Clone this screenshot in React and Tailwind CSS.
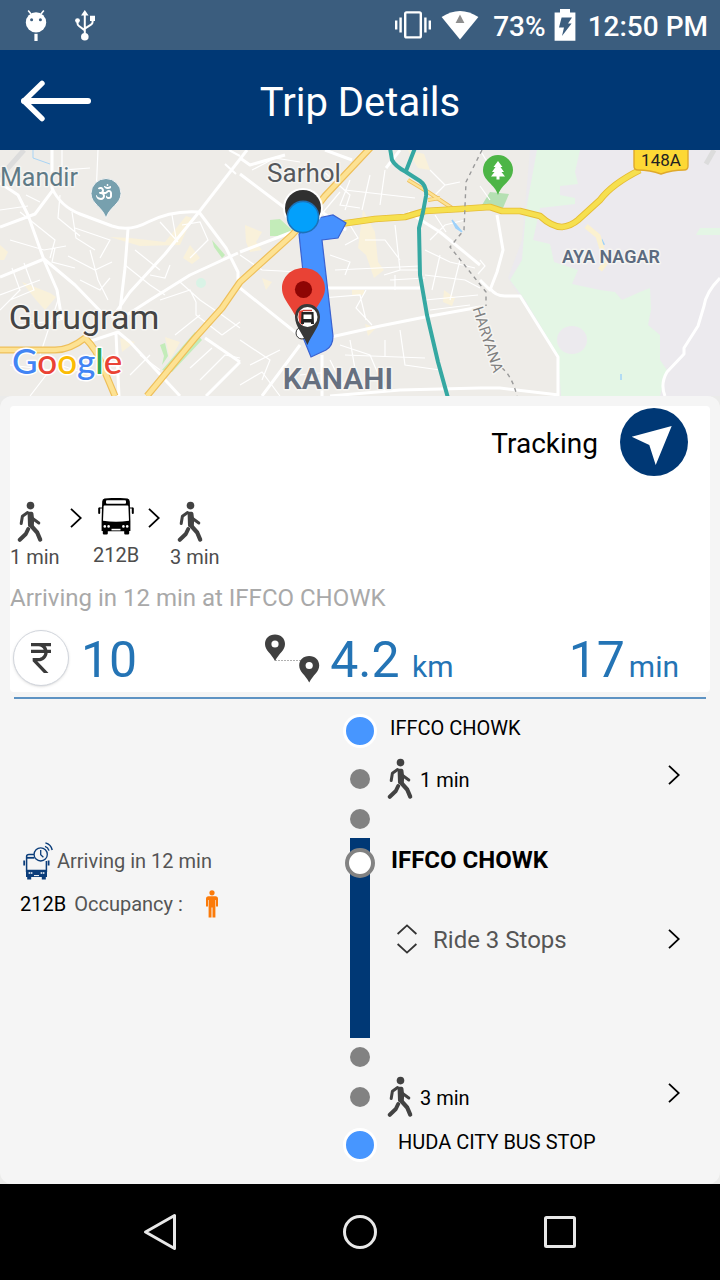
import React, { useState } from 'react';
import { FaOm } from 'react-icons/fa';
import { MdCurrencyRupee } from 'react-icons/md';
import clsx from 'clsx';

const WalkIcon = ({ className }) => (
    <svg viewBox="0 0 26 42" className={clsx("w-[26px] h-[42px] shrink-0", className)} fill="none" stroke="#424242" strokeLinecap="round" strokeLinejoin="round" aria-hidden="true">
        <circle cx="13.5" cy="4.6" r="3.8" fill="#424242" stroke="none" />
        <path d="M12.4 12.5 L14.6 12.5 L15.4 19 L15 24.5 L12.8 24.5 Z" fill="#424242" strokeWidth="3.6" />
        <path d="M10.6 11.6 L5.4 15.2 L4.2 22.6" strokeWidth="3" />
        <path d="M16 17.8 L21.8 22" strokeWidth="3" />
        <path d="M14.8 25.5 L20.2 31.5 L23.2 38.6" strokeWidth="4.2" />
        <path d="M11.2 28 L8.8 33 L2.8 38.8" strokeWidth="4" />
    </svg>
);

const BusIcon = ({ className }) => (
    <svg viewBox="0 0 36 37" className={className} aria-hidden="true">
        <path d="M6.5 .6 Q18 -.8 29.5 .6 Q31.6 1 31.8 3.5 L32.4 23 V33 H31.2 V35.5 Q31.2 36.6 30 36.6 H27.4 Q26.2 36.6 26.2 35.5 V33.2 H9.8 V35.5 Q9.8 36.6 8.6 36.6 H6 Q4.8 36.6 4.8 35.5 V33 H3.6 V23 L4.2 3.5 Q4.4 1 6.5 .6 Z" fill="currentColor" />
        <rect x="8" y="2.2" width="20" height="3.6" rx="1" fill="#fff" />
        <path d="M6.4 7.4 H29.6 Q30.4 7.4 30.4 8.4 L31 22.8 Q18 24.8 5 22.8 L5.6 8.4 Q5.6 7.4 6.4 7.4 Z" fill="#fff" />
        <circle cx="6.8" cy="28.4" r="1.3" fill="#fff" />
        <circle cx="10.6" cy="28.4" r="1.3" fill="#fff" />
        <circle cx="25.4" cy="28.4" r="1.3" fill="#fff" />
        <circle cx="29.2" cy="28.4" r="1.3" fill="#fff" />
        <rect x="13.5" y="30.8" width="9" height="1.6" fill="#fff" />
        <rect x=".2" y="9.4" width="2" height="6.6" rx="1" fill="currentColor" />
        <rect x="33.8" y="9.4" width="2" height="6.6" rx="1" fill="currentColor" />
        <path d="M1.2 10 H4 M32 10 H34.8" stroke="currentColor" strokeWidth="1" />
    </svg>
);

const ArrivingBusIcon = () => (
    <svg viewBox="0 0 30 38" className="w-[30px] h-[38px] shrink-0" fill="none" stroke="#0b3d7a" aria-hidden="true">
        <path d="M3.6 30 V14.5 Q3.6 12.4 6 12.4 H13 M23.4 19 V30" strokeWidth="1.5" />
        <path d="M4 15.8 H11.5" strokeWidth="1.8" />
        <path d="M3 27.8 H24 V35 H22.8 V37.4 H18.8 V35 H8.2 V37.4 H4.2 V35 H3 Z" fill="#0b3d7a" stroke="none" />
        <path d="M5.6 31 H9.4 M17.6 31 H21.4" stroke="#fff" strokeWidth="1.4" strokeDasharray="1.6 .6" />
        <path d="M11 33.6 H16" stroke="#fff" strokeWidth="1" />
        <path d="M1.2 18.6 V23.6 M25.6 18.6 V23.6" strokeWidth="1.8" />
        <circle cx="17.7" cy="12.4" r="6.6" strokeWidth="1.3" fill="#f5f5f5" />
        <path d="M17.7 8 V12.8 L20.4 15.2" strokeWidth="1.3" />
        <path d="M22 4.4 Q25 5.4 26 8.6 M22.4 .9 Q28 2.4 29.2 8" strokeWidth="1.5" />
    </svg>
);

const Chevron = () => (
    <svg viewBox="0 0 12 20" className="w-3 h-5 shrink-0" fill="none" stroke="#000" strokeWidth="1.8" aria-hidden="true">
        <path d="M1 .8 L10.8 10 L1 19.2" />
    </svg>
);

const StatusBar = () => (
    <div className="flex items-center h-[50px] pl-6 pr-3 bg-[#3b5d7e] text-white text-[28px] leading-8 font-medium">
        <svg viewBox="0 0 24 32" className="w-6 h-8" aria-hidden="true">
            <circle cx="12" cy="13.4" r="10.2" fill="#fff" />
            <path d="M7 5 L4.2 1.6 M17 5 L19.8 1.6" stroke="#fff" strokeWidth="1.6" />
            <circle cx="7.6" cy="10.8" r="1.5" fill="#3b5d7e" />
            <circle cx="16.4" cy="10.8" r="1.5" fill="#3b5d7e" />
            <rect x="10.4" y="24.8" width="3.2" height="7.2" fill="#fff" />
        </svg>
        <svg viewBox="0 0 22 32" className="w-[22px] h-8 ml-[26px]" fill="none" stroke="#fff" strokeWidth="2" aria-hidden="true">
            <path d="M10.8 4 V26 M3.5 11 V14.5 Q3.5 16 5 17 L10.8 21.4 M18.6 10 V13 Q18.6 14.6 17 15.6 L10.8 19.6" />
            <path d="M10.8 1 L14.6 6.4 H7 Z M16 6.8 H21 V12 H16 Z" fill="#fff" stroke="none" />
            <circle cx="3.5" cy="11.6" r="2.4" fill="#fff" stroke="none" />
            <circle cx="10.8" cy="27.8" r="3.8" fill="#fff" stroke="none" />
        </svg>
        <div className="flex-1" />
        <svg viewBox="0 0 36 28" className="w-9 h-7" fill="none" stroke="#fff" aria-hidden="true">
            <rect x="10.2" y="1.4" width="15.6" height="25" rx="1.4" strokeWidth="2.4" />
            <path d="M1.2 9.5 V18.5 M34.8 9.5 V18.5 M5.6 6.5 V21.5 M30.4 6.5 V21.5" strokeWidth="2.4" />
        </svg>
        <svg viewBox="0 0 38 30" className="w-[38px] h-[30px] ml-2.5" aria-hidden="true">
            <path d="M.6 7 Q19 -5 37.4 7 L19 29.4 Z" fill="#fff" />
            <path d="M19 4.4 L23.4 13 H14.6 Z" fill="#8f8f8f" />
        </svg>
        <span className="ml-3.5 pt-1">73%</span>
        <svg viewBox="0 0 22 32" className="w-[22px] h-8 ml-2" aria-hidden="true">
            <path d="M6 0 H16 V3.4 H21.4 V31.8 H.6 V3.4 H6 Z" fill="#fff" />
            <path d="M7.6 8.6 H18 L14 14.6 H17.6 L8 27 L10 18.6 H5 Z" fill="#3b5d7e" />
        </svg>
        <span className="ml-3 pt-1">12:50 PM</span>
    </div>
);

const Header = () => (
    <header className="grid grid-cols-[1fr_auto_1fr] items-center h-[100px] px-5 pt-0.5 bg-[#003875] text-white">
        <button type="button" aria-label="Back" className="justify-self-start">
            <svg viewBox="0 0 72 42" className="w-[72px] h-[42px]" fill="none" stroke="#fff" strokeLinecap="round" strokeLinejoin="round">
                <path d="M4 21 H68" strokeWidth="6" />
                <path d="M22 3.4 L4 21 L22 38.6" strokeWidth="5.4" />
            </svg>
        </button>
        <h1 className="text-[40px] leading-12 pt-1 font-normal">Trip Details</h1>
    </header>
);

const TripMap = () => (
    <svg viewBox="0 0 720 246" preserveAspectRatio="xMidYMid slice" className="block w-full h-[246px] shrink-0" fontFamily="Roboto, sans-serif" role="img" aria-label="Trip map">
        <rect width="720" height="246" fill="#eeece8" />
        <path d="M530 0 H720 V246 H560 L558 205 L508 128 L522 90 Z" fill="#eceaee" />
        <path d="M537 0 H580 L575 22 L578 34 L560 36 V45 L575 48 V54 L540 58 L533 90 L550 94 L554 112 L578 120 L572 134 L600 140 L615 142 L622 150 L640 142 L650 138 L651 160 L648 175 L660 185 V210 L667 220 L660 246 H561 L558 205 L525 150 L510 130 L522 110 L526 60 Z" fill="#e4f6e5" />
        <path d="M700 78 H720 V85 H696 Z" fill="#e4f6e5" />
        <ellipse cx="572" cy="190" rx="15" ry="14" fill="#eceaee" />
        <path d="M0 95 L8 102 L4 110 H0 Z M110 87 L130 88 L165 92 L186 66 L192 68 L180 95 L140 96 Z M190 95 L200 108 L192 114 L183 108 Z M22 132 L50 143 L56 147 L45 160 L36 150 Z M120 188 L135 192 L122 202 Z M165 187 L180 192 L170 210 Z M245 75 L262 82 L256 92 L262 100 L250 102 L246 92 Z M363 60 L375 82 L378 112 L384 120 L374 128 L366 105 L358 98 Z M262 128 L272 132 L266 140 Z M408 0 L424 4 L430 20 L418 18 L412 8 Z M444 140 L455 148 L452 156 L443 152 Z M352 140 H364 V145 H352 Z M365 174 L376 178 L368 186 Z" fill="#f9f1da" />
        <path d="M212 90 L225 105 L222 108 L214 97 Z M160 195 L165 193 L168 206 L162 215 L164 206 Z M162 220 L195 182 L202 190 L172 222 Z M270 70 L280 69 L292 80 L286 86 L270 86 Z" fill="#c3ecb9" />
        <path d="M482 55 L490 42 L509 44 L503 58 Z" fill="#b5e0b3" />
        <circle cx="201" cy="133" r="5" fill="#d9f3e6" />

        {/* minor streets */}
        <g fill="none" stroke="#fff" strokeWidth="1.2">
            <path d="M98 0 L96 45 M62 0 V20 L90 18 M72 62 L76 88 L95 100 M26 45 L40 52 M20 62 L55 90 L50 108 M0 60 L28 56 M60 45 L58 68 L80 86 M10 90 L44 100 L66 96 M55 98 L52 112 L75 118 M68 106 L95 120 L112 112 M90 100 L98 130 L108 150 M80 130 L100 140 L110 128 M0 145 L40 130 M12 118 L20 140 L0 160 M24 113 L34 140 L10 150 M40 205 L58 150 M10 215 L50 220 L30 246 M60 215 L90 225 M75 78 L110 90 L100 108 M125 115 L150 135 L165 145 M135 100 L160 120 M172 65 L176 88 M160 72 L178 92 M182 75 L200 72 L208 90 L190 108 M150 125 L165 128 L170 115 M180 132 L200 150 L222 165 L240 178 M160 150 L190 140 L196 152 M196 152 V165 L222 185 M200 165 L175 185 M222 185 L240 172 M140 205 L160 220 M130 225 L150 205 M190 218 L212 198 M200 230 L225 205 L240 208 M60 170 L20 175" />
            <path d="M252 20 L275 8 L300 12 M310 78 L340 42 M322 20 L350 45 L345 60 M350 30 L340 55 L360 58 M370 25 L362 60 M385 20 L380 55 M345 40 L415 48 M350 75 L358 88 L345 95 M365 90 H385 L400 110 M395 75 L400 120 L384 125 M330 105 L350 112 L345 125 M240 105 L262 120 L300 122 M335 120 L420 116 M322 148 L360 145 L366 170 M366 140 L356 158 L372 175 M395 125 V140 M400 120 H420 M390 130 L425 128 M425 100 L450 112 L475 118 M425 125 L465 130 L480 138 M440 105 L432 140 M460 110 L450 150 M425 150 L478 145 M430 160 L470 155 M340 195 L370 205 L385 240 M350 190 L356 225 L340 235 M400 180 L405 215 L440 220 M330 210 L345 240 M345 205 L425 208 M385 190 V206 M240 190 L270 210 L262 230 M250 215 L280 200 M240 235 L262 222 L280 246 M300 225 L330 222 M430 20 L445 35 L460 32 M445 35 L430 50 M430 90 L445 75 L465 70 M435 65 L446 82" />
            <path d="M480 0 L492 20 M480 36 L490 50 M480 110 L485 116 L478 124" />
        </g>

        {/* main roads */}
        <g fill="none" stroke="#fff" strokeWidth="3" strokeLinejoin="round">
            <path d="M52 0 V38 Q60 56 80 64 L112 76 Q130 82 148 72 Q172 60 199 62 L247 0" />
            <path d="M199 62 L226 98 L238 122 V134" />
            <path d="M0 77 L35 64 L53 40 M0 33 L18 45 L28 65 L44 110 L57 140 L62 170" />
            <path d="M0 127 L44 109 L75 135 L104 165 M128 79 L125 118 L120 160 M199 62 L165 104 L130 142 L112 168 M116 172 L150 150 L190 125 L238 103" />
            <path d="M88 192 L118 182 L130 192 L180 246 M116 184 L119 246 M205 188 L240 212 M206 246 L240 212" />
            <path d="M240 24 L285 58 M240 8 L250 15 L285 5 M325 0 L352 10 M322 62 L346 80 M322 138 H420 M331 187 L380 176 L425 167 L480 157 M240 138 L300 186 M240 102 L292 82 M300 195 L262 246 M322 205 V246 M330 246 L400 240 L480 238" />
            <path d="M408 62 L440 82 L480 115 M400 0 L386 18" />
            <path d="M497 65 L503 100 L497 122 L490 140 L480 130 M490 138 Q495 146 505 146 H520 L558 207 V246 M480 238 H500 L559 245" />
            <path d="M720 128 Q706 142 704 156 L698 176 L684 198 V204 L667 222 Q660 234 665 246" />
        </g>
        <path d="M225 14 L236 24 M229 0 L240 6" stroke="#fff" strokeWidth="2" />
        <path d="M706 14 L714 0" stroke="#dcdcdc" strokeWidth="5" />
        <path d="M0 27 L24 0" stroke="#dcdcdc" strokeWidth="5" />
        <path d="M33 0 V8 L50 14" fill="none" stroke="#a9d4f5" strokeWidth="1" />
        <path d="M452 70 L462 82 L456 78 Z M602 90 L604 94 H600 Z M621 224 V230" fill="#9dd1fa" stroke="#9dd1fa" strokeWidth="1.4" />
        <path d="M586 76 L598 86 L606 112 L600 120" fill="none" stroke="#fbf1d0" strokeWidth="5" />

        {/* highways */}
        <g fill="none" strokeLinejoin="round">
            <g stroke="#eebf5a" strokeWidth="7">
                <path d="M0 200 H55 Q70 200 85 188 Q97 200 102 215 L115 246" />
                <path d="M147 246 L195 188 L222 158 L240 132 L292 85 L310 65 L325 46 L372 -4" />
                <path d="M408 30 L428 42 L452 58 M428 50 L440 48" strokeWidth="4" />
            </g>
            <g stroke="#fde293" strokeWidth="4.6">
                <path d="M0 200 H55 Q70 200 85 188 Q97 200 102 215 L115 246" />
                <path d="M147 246 L195 188 L222 158 L240 132 L292 85 L310 65 L325 46 L372 -4" />
                <path d="M408 30 L428 42 L452 58 M428 50 L440 48" strokeWidth="2.4" />
            </g>
            <path d="M340 74 L375 69 L405 67 L425 61 L460 59 L490 57 L502 61 L520 61 L540 66 Q552 77 562 77 Q571 76 578 70 L600 50 Q612 34 640 20" stroke="#e6bd35" strokeWidth="6.6" />
            <path d="M340 74 L375 69 L405 67 L425 61 L460 59 L490 57 L502 61 L520 61 L540 66 Q552 77 562 77 Q571 76 578 70 L600 50 Q612 34 640 20" stroke="#f6e04f" strokeWidth="4.8" />
            <path d="M390 -2 L392 10 Q395 16 406 22 L420 31 Q427 36 426 46 L423 62 L419 78 L420 125 L427 165 L438 212 L448 248 M415 -2 L406 21" stroke="#35a8a2" strokeWidth="4" />
            <path d="M482 0 L466 32 L464 80 L450 97 L486 142 V156 M502 218 Q512 226 517 246" stroke="#9a9a9a" strokeWidth="1.4" strokeDasharray="4 4" />
        </g>

        {/* route */}
        <path d="M299 84 L303 122 L302 185 L311 207 L326 200 Q333 196 333 186 L322 90 L338 88 L346 73 L333 65 L318 68 Z" fill="#4691ff" stroke="#3a62d0" strokeWidth="1.2" />
        <circle cx="303" cy="58" r="20" fill="#fff" />
        <circle cx="303" cy="58" r="18" fill="#303030" />
        <circle cx="303" cy="67" r="15.6" fill="#03a0fb" stroke="#1d72b8" strokeWidth="1.6" />
        <circle cx="302" cy="183" r="6" fill="#fff" stroke="#333" strokeWidth="1" />
        <path d="M303.5 118 C291 118 282 127 282 138.5 C282 151 295 158 301 180 L307 180 C312 158 325 151 325 138.5 C325 127 316 118 303.5 118 Z" fill="#e94235" />
        <circle cx="303.5" cy="139.5" r="8.6" fill="#8e0504" />
        <path d="M307 154 C299.5 154 295 160 295 167 C295 176 303 184 307.4 195 C312 184 320 176 320 167 C320 160 315 154 307 154 Z" fill="#383838" />
        <circle cx="307.5" cy="167" r="10" fill="#fff" />
        <path d="M299 161 Q297.5 167 299.5 173 L303 175 V160 Z" fill="#e94235" />
        <path d="M301.5 162 H313.5 L314 174 H311 V172.5 H304 V174 H301 Z" fill="#222" />
        <path d="M303.5 164.5 H311.5 V169 H303.5 Z" fill="#fff" />
        <path d="M303 160.5 H312" stroke="#c43c33" strokeWidth="1.4" />

        {/* places */}
        <path d="M106 28.5 A15 15 0 0 0 91 43.5 C91 54 103 57 106 68.5 C109 57 121 54 121 43.5 A15 15 0 0 0 106 28.5 Z" fill="#77a0ae" stroke="#f4f4f4" strokeWidth="1" />
        <FaOm x="96" y="34" width="20" height="18" color="#fff" />
        <path d="M498 5 A15 15 0 0 0 483 20 C483 31 495 34 498 45 C501 34 513 31 513 20 A15 15 0 0 0 498 5 Z" fill="#4db546" />
        <path d="M498 11 L502.5 17 H500.5 L504 22 H501.5 L505 26.5 H499.5 V29.5 H496.5 V26.5 H491 L494.5 22 H492 L495.5 17 H493.5 Z" fill="#fff" />
        <path d="M634 -4 H688 V16 Q688 20 684 20 Q672 20 661 24 Q650 20 638 20 Q634 20 634 16 Z" fill="#fdd835" stroke="#dfa92c" strokeWidth="1.4" />
        <text x="661" y="16" fontSize="17" textAnchor="middle" fill="#222">148A</text>

        <g stroke="#f6f5f2" strokeWidth="3" paintOrder="stroke" strokeLinejoin="round">
            <text x="0" y="36" fontSize="25" fill="#5f7a86">Mandir</text>
            <text x="304" y="32" fontSize="26" textAnchor="middle" fill="#55585c">Sarhol</text>
            <text x="84" y="179" fontSize="34" textAnchor="middle" fill="#444">Gurugram</text>
            <text x="338" y="239" fontSize="30" fontWeight="600" textAnchor="middle" fill="#667080">KANAHI</text>
            <text x="611" y="113" fontSize="18" fontWeight="600" textAnchor="middle" fill="#5c6b80">AYA NAGAR</text>
            <text transform="translate(483 191) rotate(72)" fontSize="15" textAnchor="middle" fill="#808080">HARYANA</text>
            <text x="12" y="224" fontSize="35" fontWeight="500" fontFamily="Lato, sans-serif" stroke="#fff">
                <tspan fill="#4285f4">G</tspan>
                <tspan fill="#ea4335">o</tspan>
                <tspan fill="#fbbc05">o</tspan>
                <tspan fill="#4285f4">g</tspan>
                <tspan fill="#34a853">l</tspan>
                <tspan fill="#ea4335">e</tspan>
            </text>
        </g>
    </svg>
);

const TripSummary = () => (
    <section className="bg-white rounded-sm pt-0.5 pb-1">
        <div className="flex justify-end pr-[22px]">
            <button type="button" className="flex items-center gap-[22px] text-[28px] leading-8 text-black">
                <span className="pt-1">Tracking</span>
                <svg viewBox="0 0 68 68" className="w-[68px] h-[68px]" aria-hidden="true">
                    <circle cx="34" cy="34" r="34" fill="#003875" />
                    <path d="M51.7 18 L11.7 28.7 L29.3 37 L35.7 57 Z" fill="#fff" />
                </svg>
            </button>
        </div>

        <div className="flex items-start mt-[22px] text-xl leading-6 text-[#4d4d4d]">
            <div className="flex flex-col w-[50px] pt-[3px] pl-[7px]">
                <WalkIcon className="mb-0.5" />
                <span className="-ml-[7px] whitespace-nowrap">1 min</span>
            </div>
            <div className="pt-2.5 pl-2.5"><Chevron /></div>
            <div className="flex flex-col items-center w-[46px] ml-[11px]">
                <BusIcon className="w-9 h-[37px] mb-2 text-black" />
                <span>212B</span>
            </div>
            <div className="pt-2.5 pl-[9px]"><Chevron /></div>
            <div className="flex flex-col pt-[3px] pl-[17px]">
                <WalkIcon className="mb-0.5" />
                <span className="-ml-[7px] whitespace-nowrap">3 min</span>
            </div>
        </div>

        <p className="mt-[15px] text-2xl leading-7 text-[#a9a9a9]">Arriving in 12 min at IFFCO CHOWK</p>

        <div className="flex items-center justify-between mt-4 pl-[3px] pr-[31px] text-[50px] leading-14 text-[#2474b5]">
            <div className="flex items-center gap-3 w-34">
                <span className="flex items-center justify-center w-14 h-14 rounded-full bg-white border border-gray-300 shadow shrink-0">
                    <MdCurrencyRupee className="w-10 h-10 text-[#3a3a3a]" aria-hidden="true" />
                </span>
                <span className="pt-1">10</span>
            </div>
            <div className="flex items-center gap-2.5">
                <svg viewBox="0 0 56 50" className="w-14 h-[50px]" aria-hidden="true">
                    <path d="M11 27.5 H38" stroke="#b0b0b0" strokeWidth="1.2" strokeDasharray="2 1" />
                    <path d="M11 1.5 C5 1.5 1 5.5 1 11 C1 17.5 7 20 11 28 C15 20 21 17.5 21 11 C21 5.5 17 1.5 11 1.5 Z" fill="#404040" />
                    <circle cx="11" cy="11" r="3.6" fill="#fff" />
                    <path d="M45.2 23 C39.2 23 35.2 27 35.2 32.5 C35.2 39 41.2 41.5 45.2 49.5 C49.2 41.5 55.2 39 55.2 32.5 C55.2 27 51.2 23 45.2 23 Z" fill="#404040" />
                    <circle cx="45.2" cy="32.5" r="3.6" fill="#fff" />
                </svg>
                <span className="pt-1">4.2 <span className="text-3xl">km</span></span>
            </div>
            <div className="flex items-baseline gap-1 pt-1">
                17<span className="text-3xl">min</span>
            </div>
        </div>
    </section>
);

const EndDot = () => <span className="w-[34px] h-[34px] shrink-0 rounded-full bg-[#4796ff] border-3 border-white" />;
const Dot = () => <span className="w-5 h-5 rounded-full bg-[#828282]" />;

const Row = ({ className, left, rail, children }) => (
    <li className={clsx("grid grid-cols-[1fr_32px_1fr]", className)}>
        <div>{left}</div>
        <div className="relative flex justify-center items-center">{rail}</div>
        {children}
    </li>
);

const WalkStep = ({ minutes }) => (
    <button type="button" className="flex items-center pl-[11px] pr-10 text-xl leading-6 text-black">
        <WalkIcon />
        <span className="ml-[7px] pt-0.5">{minutes} min</span>
        <span className="ml-auto pb-2"><Chevron /></span>
    </button>
);

const Timeline = () => {
    const [expanded, setExpanded] = useState(false);

    return (
        <ol className="pt-3.5 pb-5 text-black">
            <Row className="h-9" rail={<EndDot />}>
                <span className="self-center pl-3.5 pb-1.5 text-xl leading-6">IFFCO CHOWK</span>
            </Row>
            <Row className="h-[60px]" rail={<Dot />}>
                <WalkStep minutes={1} />
            </Row>
            <Row className="h-5 mb-[9px]" rail={<Dot />} />
            <Row
                className="h-[200px]"
                left={
                    <div className="pl-5 pt-1 text-xl leading-6">
                        <p className="flex items-center gap-1 pl-[3px] text-[#555]">
                            <ArrivingBusIcon />
                            Arriving in 12 min
                        </p>
                        <p className="flex items-center gap-2 mt-2.5">
                            <span>212B</span>
                            <span className="text-[#555]">Occupancy :</span>
                            <svg viewBox="0 0 14 28" className="w-3.5 h-7 ml-3.5" fill="#fb7a09" role="img" aria-label="Low">
                                <circle cx="7" cy="2.8" r="2.6" />
                                <path d="M3.5 6.2 H10.5 Q13 6.2 13 8.8 V16.5 H11 V10 H10.4 V27.6 H7.5 V17.5 H6.5 V27.6 H3.6 V10 H3 V16.5 H1 V8.8 Q1 6.2 3.5 6.2 Z" />
                            </svg>
                        </p>
                    </div>
                }
                rail={
                    <>
                        <span className="w-5 h-full bg-[#003875]" />
                        <span className="absolute top-2.5 w-[30px] h-[30px] rounded-full bg-white border-4 border-[#828282]" />
                    </>
                }
            >
                <div className="pl-[15px] pt-2 pr-10">
                    <h2 className="text-2xl leading-7 font-bold">IFFCO CHOWK</h2>
                    <button type="button" onClick={() => setExpanded(!expanded)} aria-expanded={expanded} className="flex items-center w-full mt-12 pl-1.5 text-2xl leading-8 text-[#555]">
                        <svg viewBox="0 0 20 30" className="w-5 h-[30px]" fill="none" stroke="#333" strokeWidth="1.8" aria-hidden="true">
                            <path d="M.6 10 L10 1.4 L19.4 10 M.6 20 L10 28.6 L19.4 20" />
                        </svg>
                        <span className="ml-4 pt-0.5">Ride 3 Stops</span>
                        <span className="ml-auto"><Chevron /></span>
                    </button>
                </div>
            </Row>
            <Row className="h-5 mt-[9px]" rail={<Dot />} />
            <Row className="h-[60px]" rail={<Dot />}>
                <WalkStep minutes={3} />
            </Row>
            <Row className="h-9" rail={<EndDot />}>
                <span className="self-center pl-[22px] pb-1.5 text-xl leading-6">HUDA CITY BUS STOP</span>
            </Row>
        </ol>
    );
};

const NavBar = () => (
    <nav className="grid grid-cols-3 items-center justify-items-center h-24 px-15 bg-black">
        <button type="button" aria-label="Back">
            <svg viewBox="0 0 36 38" className="w-9 h-[38px]" fill="none" stroke="#e8e8e8" strokeWidth="3" strokeLinejoin="round">
                <path d="M3.5 19 L32.5 2.5 V35.5 Z" />
            </svg>
        </button>
        <button type="button" aria-label="Home">
            <svg viewBox="0 0 36 36" className="w-9 h-9" fill="none" stroke="#e8e8e8" strokeWidth="3">
                <circle cx="18" cy="18" r="15.5" />
            </svg>
        </button>
        <button type="button" aria-label="Recent apps">
            <svg viewBox="0 0 36 36" className="w-9 h-9" fill="none" stroke="#e8e8e8" strokeWidth="3">
                <rect x="3.5" y="3.5" width="29" height="29" rx="1" />
            </svg>
        </button>
    </nav>
);

const App = () => (
    <div className="flex flex-col min-h-screen font-['Roboto',sans-serif] bg-[#ebebea]">
        <StatusBar />
        <Header />
        <TripMap />
        <main className="flex-1 rounded-xl bg-[#f5f5f5] pt-2.5">
            <div className="px-2.5">
                <TripSummary />
            </div>
            <hr className="mx-3.5 mt-[5px] border-t-2 border-[#5e93c3]" />
            <Timeline />
        </main>
        <NavBar />
    </div>
);

export default App;
